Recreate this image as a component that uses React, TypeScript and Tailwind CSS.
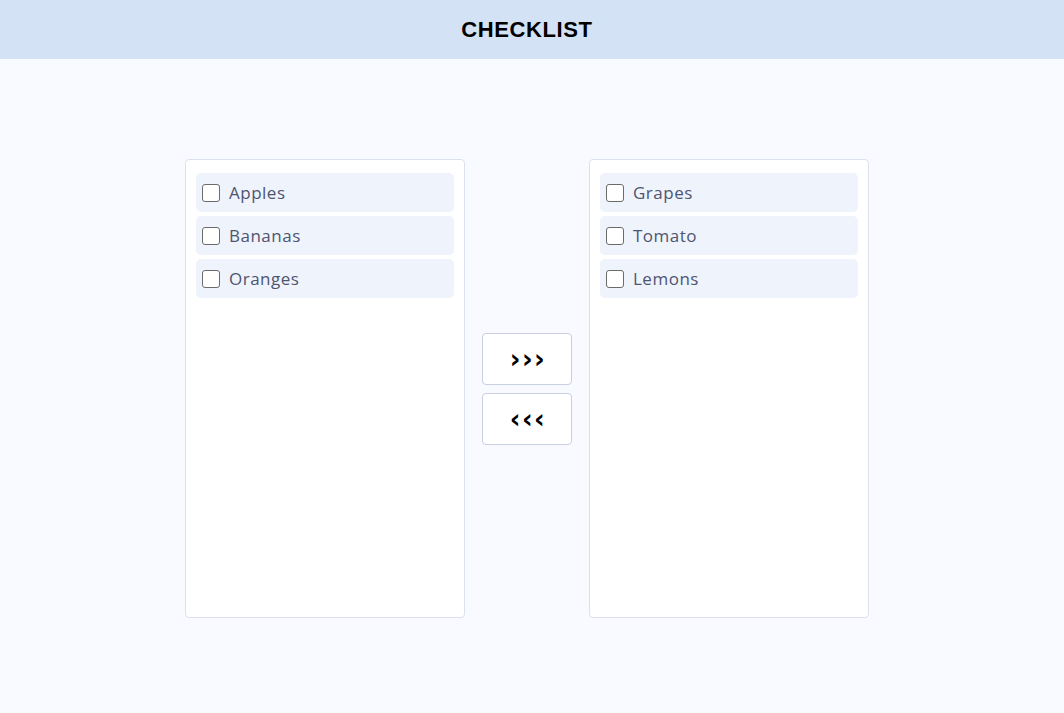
import { useState } from "react";

const font = { fontFamily: '"Open Sans", "Noto Sans", sans-serif' };
const titleFont = { fontFamily: '"Liberation Sans", Arial, sans-serif' };
const arrowFont = { fontFamily: '"DejaVu Sans", sans-serif' };

function ItemList({ items }: { items: string[] }) {
  return (
    <div className="h-[459px] w-[280px] rounded border border-[#dbe2ee] bg-white px-[10px] pt-[13px]">
      <div className="flex flex-col gap-1">
        {items.map((item) => (
          <label key={item} className="flex h-[39px] items-center gap-[9px] rounded-[5px] bg-[#eef3fc] px-[6px]">
            <span className="h-[18px] w-[18px] shrink-0 rounded-[3px] border border-[#6b6b6b] bg-white" />
            <span className="text-[17px] tracking-[0.5px] text-[#4e5570]">{item}</span>
          </label>
        ))}
      </div>
    </div>
  );
}

export default function App() {
  const [left] = useState(["Apples", "Bananas", "Oranges"]);
  const [right] = useState(["Grapes", "Tomato", "Lemons"]);

  return (
    <div className="min-h-[713px] bg-[#f8faff]" style={font}>
      <header className="flex h-[59px] items-center justify-center bg-[#d4e2f5] pr-[10px]">
        <h1 className="text-[22px] font-bold tracking-[0.6px] text-black" style={titleFont}>
          CHECKLIST
        </h1>
      </header>
      <main className="flex items-center justify-center gap-[17px] pt-[100px] pr-[10px]">
        <ItemList items={left} />
        <div className="flex flex-col gap-[8px]">
          <button className="h-[52px] w-[90px] rounded border border-[#c9cfe3] bg-white pl-[2px] text-[26px] leading-none font-bold tracking-[1.5px] text-black" style={arrowFont}>
            ›››
          </button>
          <button className="h-[52px] w-[90px] rounded border border-[#c9cfe3] bg-white pl-[2px] text-[26px] leading-none font-bold tracking-[1.5px] text-black" style={arrowFont}>
            ‹‹‹
          </button>
        </div>
        <ItemList items={right} />
      </main>
    </div>
  );
}
